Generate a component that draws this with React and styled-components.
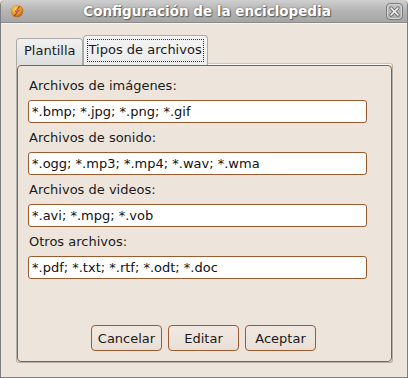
import React from 'react';
import styled, { createGlobalStyle } from 'styled-components';

const Global = createGlobalStyle`
  html, body { margin: 0; padding: 0; background: #ede5dc; }
  body { font-family: "DejaVu Sans", "Liberation Sans", sans-serif; }
`;

const Window = styled.div`
  width: 408px;
  height: 378px;
  box-sizing: border-box;
  display: flex;
  flex-direction: column;
  background: #ede5dc;
  border: 1px solid #7d7d7d;
  border-top: none;
  border-radius: 5px 5px 0 0;
  overflow: hidden;
`;

const TitleBar = styled.div`
  height: 22px;
  flex: none;
  display: flex;
  align-items: center;
  padding: 0 4px 0 9px;
  background: linear-gradient(#cfcfcf, #b4b4b4 50%, #a6a6a6);
  border-bottom: 1px solid #8a8a8a;
  border-radius: 5px 5px 0 0;
`;

const Title = styled.div`
  flex: 1;
  text-align: center;
  color: #fff;
  font-weight: bold;
  font-size: 13.5px;
  text-shadow: 1px 1px 1px #5a5a5a, 0 0 2px #6a6a6a;
  padding-left: 4px;
`;

const CloseButton = styled.div`
  width: 17px;
  height: 17px;
  box-sizing: border-box;
  border: 1px solid #7a7a7a;
  border-radius: 4px;
  background: linear-gradient(#c4c4c4, #a9a9a9);
  box-shadow: inset 0 0 0 1px #d6d6d6;
  display: flex;
  align-items: center;
  justify-content: center;
`;

const Body = styled.div`
  flex: 1;
  display: flex;
  flex-direction: column;
  padding: 12px 14px 14px 15px;
  border-top: 1px solid #f7f3ef;
`;

const TabStrip = styled.div`
  display: flex;
  align-items: flex-end;
  height: 29px;
  padding-left: 0;
  position: relative;
  z-index: 1;
  margin-bottom: -2px;
`;

const Tab = styled.div`
  box-sizing: border-box;
  height: ${p => (p.$active ? 30 : 27)}px;
  padding: ${p => (p.$active ? '3px 3px 0' : '4px 6px 0 7px')};
  font-size: 13px;
  color: #1a1a1a;
  border: 1px solid #a9a9a9;
  border-bottom: none;
  border-radius: 4px 4px 0 0;
  background: ${p => (p.$active ? 'linear-gradient(#f3f3f3, #ececec)' : 'linear-gradient(#f1f1f1, #dedede)')};
`;

const Focus = styled.div`
  border: 1px dotted #333;
  padding: 1px 1px 3px;
  line-height: 17px;
`;

const Notebook = styled.div`
  flex: 1;
  border: 1px solid #b4b0ab;
  border-top-color: #c9c4be;
  border-radius: 0 3px 3px 3px;
  padding: 1px 0 0 0;
  display: flex;
  box-shadow: inset 1px 1px 0 #fbf9f7;
`;

const Frame = styled.div`
  flex: 1;
  display: flex;
  flex-direction: column;
  border: 1px solid #9c5a31;
  border-radius: 4px;
  padding: 12px 24px 10px 10px;
`;

const Label = styled.div`
  font-size: 13px;
  line-height: 16px;
  color: #1a1a1a;
  padding-left: 1px;
  margin-bottom: 6px;
`;

const Field = styled.div`
  height: 23px;
  box-sizing: border-box;
  border: 1px solid #9c5a31;
  border-radius: 3px;
  background: #fff;
  font-size: 13px;
  line-height: 21px;
  padding-left: 3px;
  color: #111;
  margin-bottom: 7px;
`;

const ButtonRow = styled.div`
  margin-top: auto;
  display: flex;
  justify-content: center;
  gap: 6px;
  padding-left: 12px;
`;

const Button = styled.div`
  width: 71px;
  height: 26px;
  box-sizing: border-box;
  border: 1px solid #9c5a31;
  border-radius: 4px;
  background: linear-gradient(#f1e9e1, #e9dfd6);
  font-size: 13px;
  color: #1a1a1a;
  display: flex;
  align-items: center;
  justify-content: center;
`;

const AppIcon = () => (
  <svg width="14" height="14" viewBox="0 0 14 14">
    <defs>
      <radialGradient id="orb" cx="40%" cy="35%" r="65%">
        <stop offset="0" stopColor="#f9d27a" />
        <stop offset="0.6" stopColor="#e59a2c" />
        <stop offset="1" stopColor="#b0621c" />
      </radialGradient>
    </defs>
    <circle cx="7" cy="7" r="6.3" fill="url(#orb)" />
    <path d="M9.5 2.2 L5.2 7.6 L7.4 7.4 L4.2 12.2 L9.3 6.3 L7.2 6.5 Z" fill="#fff4ea" stroke="#b32414" strokeWidth="0.7" />
  </svg>
);

const CloseIcon = () => (
  <svg width="11" height="11" viewBox="0 0 11 11">
    <path d="M2 2 L9 9 M9 2 L2 9" stroke="#6e6e6e" strokeWidth="3.2" strokeLinecap="round" />
    <path d="M2 2 L9 9 M9 2 L2 9" stroke="#f4f4f4" strokeWidth="1.6" strokeLinecap="round" />
  </svg>
);

const groups = [
  ['Archivos de imágenes:', '*.bmp; *.jpg; *.png; *.gif'],
  ['Archivos de sonido:', '*.ogg; *.mp3; *.mp4; *.wav; *.wma'],
  ['Archivos de videos:', '*.avi; *.mpg; *.vob'],
  ['Otros archivos:', '*.pdf; *.txt; *.rtf; *.odt; *.doc'],
];

const App = () => {
  return (
    <>
      <Global />
      <Window>
        <TitleBar>
          <AppIcon />
          <Title>Configuración de la enciclopedia</Title>
          <CloseButton>
            <CloseIcon />
          </CloseButton>
        </TitleBar>
        <Body>
          <TabStrip>
            <Tab>Plantilla</Tab>
            <Tab $active>
              <Focus>Tipos de archivos</Focus>
            </Tab>
          </TabStrip>
          <Notebook>
            <Frame>
              {groups.map(([label, value]) => (
                <div key={label}>
                  <Label>{label}</Label>
                  <Field>{value}</Field>
                </div>
              ))}
              <ButtonRow>
                <Button>Cancelar</Button>
                <Button>Editar</Button>
                <Button>Aceptar</Button>
              </ButtonRow>
            </Frame>
          </Notebook>
        </Body>
      </Window>
    </>
  );
};

export default App;
